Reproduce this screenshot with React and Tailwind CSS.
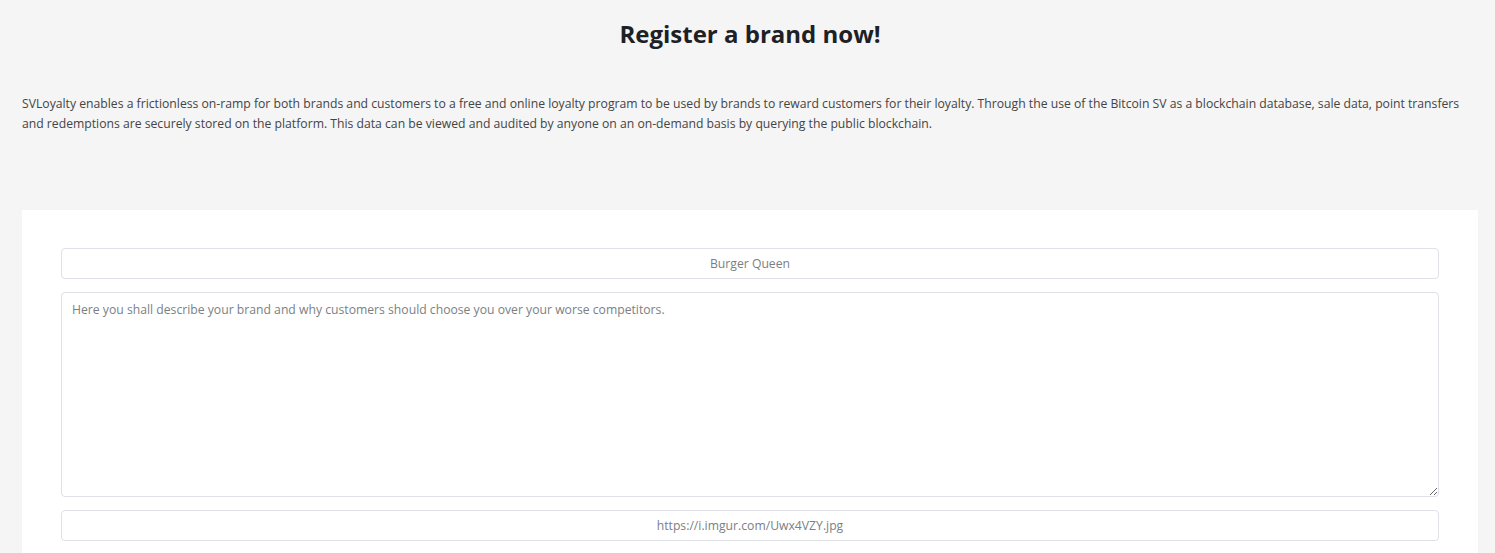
export default function App() {
  return (
    <div className="min-h-screen bg-[#f5f5f5] font-['Open_Sans',sans-serif]">
      <div className="ml-[22px] w-[1456px]">
        <h1 className="pt-[18px] text-center text-[24px] font-bold leading-[32px] text-[#1d2125]">
          Register a brand now!
        </h1>
        <p className="mt-[44px] text-[12.2px] leading-[20px] text-[#444]">
          SVLoyalty enables a frictionless on-ramp for both brands and customers to a free and online loyalty program to be used by brands to reward customers for their loyalty. Through the use of the Bitcoin SV as a blockchain database, sale data, point transfers and redemptions are securely stored on the platform. This data can be viewed and audited by anyone on an on-demand basis by querying the public blockchain.
        </p>
        <form className="mt-[76px] flex flex-col gap-[13px] bg-white px-[39px] pt-[38px] pb-[40px]">
          <input
            className="h-[31px] w-full rounded-[4px] border border-[#dfe1e6] bg-white text-center text-[12.2px] text-[#555] outline-none placeholder:text-[#7a7f85]"
            placeholder="Burger Queen"
          />
          <textarea
            className="h-[205px] w-full rounded-[4px] border border-[#dfe1e6] bg-white px-[10px] py-[8px] text-[12.2px] text-[#555] outline-none placeholder:text-[#7a7f85]"
            placeholder="Here you shall describe your brand and why customers should choose you over your worse competitors."
          />
          <input
            className="h-[31px] w-full rounded-[4px] border border-[#dfe1e6] bg-white text-center text-[12.2px] text-[#555] outline-none placeholder:text-[#7a7f85]"
            placeholder="https://i.imgur.com/Uwx4VZY.jpg"
          />
        </form>
      </div>
    </div>
  );
}
